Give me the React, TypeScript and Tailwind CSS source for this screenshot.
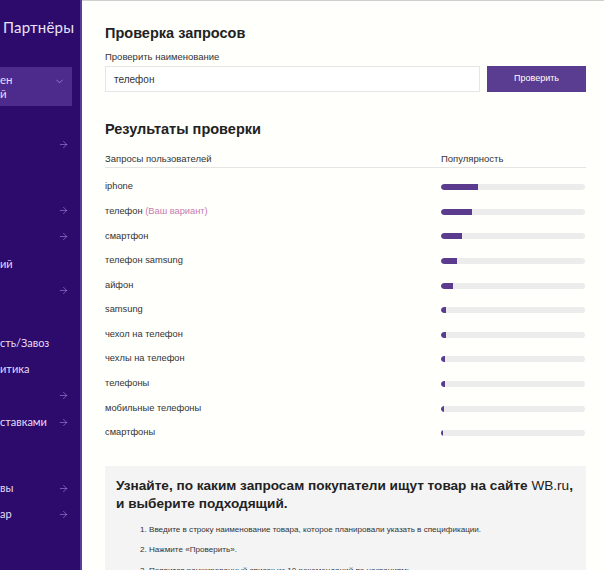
import React from 'react';
import { ArrowRight, ChevronDown } from 'lucide-react';

const QUERIES: { text: string; fill: number; mine?: boolean }[] = [
  { text: 'iphone', fill: 37 },
  { text: 'телефон', fill: 31, mine: true },
  { text: 'смартфон', fill: 21 },
  { text: 'телефон samsung', fill: 16 },
  { text: 'айфон', fill: 12 },
  { text: 'samsung', fill: 5 },
  { text: 'чехол на телефон', fill: 5 },
  { text: 'чехлы на телефон', fill: 4 },
  { text: 'телефоны', fill: 4 },
  { text: 'мобильные телефоны', fill: 3 },
  { text: 'смартфоны', fill: 2 },
];

// sidebar is cut at the left edge; only the tails of labels are visible
const NAV: { label?: string; arrow?: boolean; space: string }[] = [
  { arrow: true, space: 'mt-0' },
  { arrow: true, space: 'mt-[40px]' },
  { arrow: true, space: 'mt-0' },
  { label: 'ий', space: 'mt-[2px]' },
  { arrow: true, space: 'mt-0' },
  { label: 'сть/Завоз', space: 'mt-[27px]' },
  { label: 'итика', space: 'mt-0' },
  { arrow: true, space: 'mt-0' },
  { label: 'ставками', arrow: true, space: 'mt-[1px]' },
  { label: 'вы', arrow: true, space: 'mt-[40px]' },
  { label: 'ар', arrow: true, space: 'mt-0' },
];

const Sidebar = () => (
  <aside className="w-[82px] shrink-0 bg-[#2c0b6d] border-r-2 border-[#5a3d9a] overflow-hidden font-['Lato',sans-serif] text-white">
    <div className="pt-[17px] pl-[3px] text-[15px] leading-[20px] tracking-[0.2px] text-[#e9e2f7]">Партнёры</div>
    <div className="mt-[30px] w-[72px] h-[39px] bg-[#4c2b8d] flex items-start justify-between pr-[7px] pt-[6px]">
      <div className="text-[11.5px] leading-[14px] text-[#e6ddf5]">
        <div>ен</div>
        <div>й</div>
      </div>
      <ChevronDown size={11} strokeWidth={1.5} className="mt-[3px] text-[#b39be0]" />
    </div>
    <div className="mt-[25px] w-[72px]">
      {NAV.map((item, i) => (
        <div key={i} className={`h-[26px] flex items-center justify-between pr-[3px] ${item.space}`}>
          <span className="text-[11px] text-[#e6ddf5] whitespace-nowrap">{item.label ?? ''}</span>
          {item.arrow && <ArrowRight size={11} strokeWidth={1.3} className="text-[#a88ad8]" />}
        </div>
      ))}
    </div>
  </aside>
);

const Bar = ({ fill }: { fill: number }) => (
  <div className="w-[144px] h-[6px] rounded-full bg-[#ececec] overflow-hidden">
    <div className="h-full rounded-l-full bg-[#5a3b8e]" style={{ width: fill }} />
  </div>
);

export default function App() {
  return (
    <div className="flex w-[604px] h-[570px] overflow-hidden bg-[#fffffc] font-['Liberation_Sans',Arial,sans-serif] text-[#2b2b2b]">
      <Sidebar />
      <main className="flex-1 border-t border-[#cfcfcf] pl-[23px] pr-[18px]">
        <h1 className="pt-[23px] text-[14.5px] leading-[18px] font-bold text-[#222]">Проверка запросов</h1>
        <div className="mt-[9px] text-[9.5px] leading-[12px] text-[#333]">Проверить наименование</div>
        <div className="mt-[3px] flex gap-[7px]">
          <div className="flex-1 h-[26px] border border-[#e6e6e6] bg-white flex items-center pl-[8px] text-[10px] text-[#333]">
            телефон
          </div>
          <button className="w-[99px] h-[26px] bg-[#5a3c91] text-white text-[9px] flex items-center justify-center">
            Проверить
          </button>
        </div>

        <h2 className="mt-[28px] text-[14.5px] leading-[18px] font-bold text-[#222]">Результаты проверки</h2>
        <div className="mt-[14px] flex items-center h-[15px] text-[9.5px] text-[#333]">
          <span className="w-[336px]">Запросы пользователей</span>
          <span>Популярность</span>
        </div>
        <div className="border-b border-[#e4e4e4]" />
        <div className="mt-[7px]">
          {QUERIES.map((q) => (
            <div key={q.text} className="h-[24.6px] flex items-center text-[9.3px] text-[#333]">
              <span className="w-[336px]">
                {q.text}
                {q.mine && <span className="text-[#c77bb0]"> (Ваш вариант)</span>}
              </span>
              <Bar fill={q.fill} />
            </div>
          ))}
        </div>

        <section className="mt-[20px] bg-[#f4f4f4] pl-[11px] pr-[6px] pt-[11px] pb-[20px]">
          <h3 className="text-[13.6px] leading-[18px] font-bold text-[#222]">
            Узнайте, по каким запросам покупатели ищут товар на сайте <span className="font-normal">WB.ru</span>,
            и выберите подходящий.
          </h3>
          <ol className="mt-[11px] pl-[24px] text-[8.1px] leading-[11px] text-[#333] space-y-[9.5px]">
            <li>1. Введите в строку наименование товара, которое планировали указать в спецификации.</li>
            <li>2. Нажмите «Проверить».</li>
            <li>3. Появится ранжированный список из 10 рекомендаций по названиям:</li>
          </ol>
        </section>
      </main>
    </div>
  );
}
